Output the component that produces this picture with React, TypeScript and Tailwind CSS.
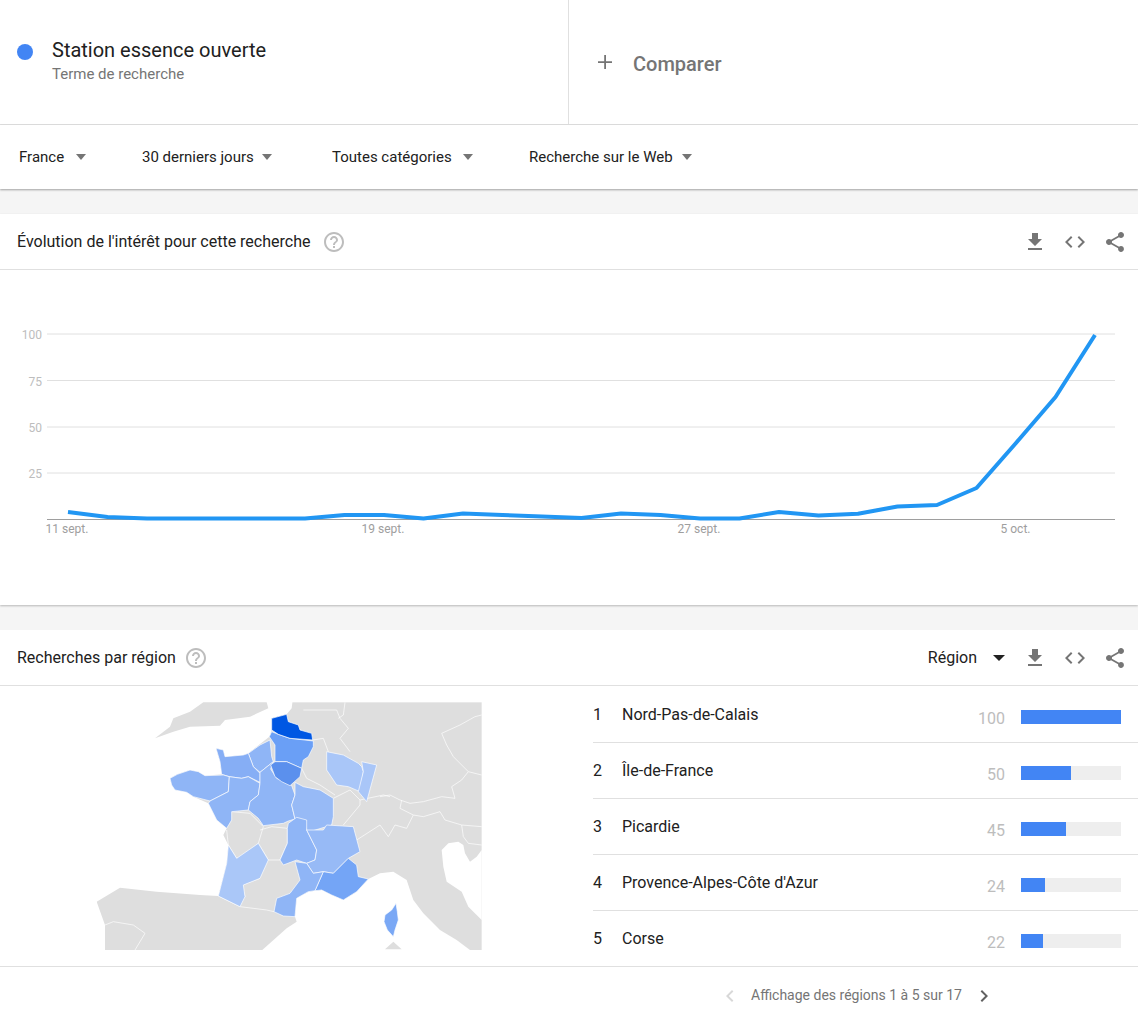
import React from "react";

const font = { fontFamily: "Roboto, sans-serif" };

const P = {
  download: "M19 9h-4V3H9v6H5l7 7 7-7zM5 18v2h14v-2H5z",
  code: "M9.4 16.6L4.8 12l4.6-4.6L8 6l-6 6 6 6 1.4-1.4zm5.2 0l4.6-4.6-4.6-4.6L16 6l6 6-6 6-1.4-1.4z",
  share:
    "M18 16.08c-.76 0-1.44.3-1.96.77L8.91 12.7c.05-.23.09-.46.09-.7s-.04-.47-.09-.7l7.05-4.11c.54.5 1.25.81 2.04.81 1.66 0 3-1.34 3-3s-1.34-3-3-3-3 1.34-3 3c0 .24.04.47.09.7L8.04 9.81C7.5 9.31 6.79 9 6 9c-1.66 0-3 1.34-3 3s1.34 3 3 3c.79 0 1.5-.31 2.04-.81l7.12 4.16c-.05.21-.08.43-.08.65 0 1.61 1.31 2.92 2.92 2.92 1.61 0 2.92-1.31 2.92-2.92s-1.31-2.92-2.92-2.92z",
  help: "M11 18h2v-2h-2v2zm1-16C6.48 2 2 6.48 2 12s4.48 10 10 10 10-4.48 10-10S17.52 2 12 2zm0 18c-4.41 0-8-3.59-8-8s3.59-8 8-8 8 3.59 8 8-3.59 8-8 8zm0-14c-2.21 0-4 1.79-4 4h2c0-1.1.9-2 2-2s2 .9 2 2c0 2-3 1.75-3 5h2c0-2.25 3-2.5 3-5 0-2.21-1.79-4-4-4z",
};

function Icon({ d, className }: { d: string; className: string }) {
  return (
    <svg viewBox="0 0 24 24" className={className} fill="currentColor">
      <path d={d} />
    </svg>
  );
}

function Filter({ label, className, caret }: { label: string; className: string; caret: string }) {
  return (
    <div className={`flex items-center text-[15px] text-[#212121] ${className}`}>
      <span>{label}</span>
      <span className={`h-0 w-0 border-x-[5.5px] border-t-[6px] border-x-transparent border-t-[#757575] ${caret}`} />
    </div>
  );
}

function Actions() {
  return (
    <div className="flex items-center gap-4 text-[#757575]">
      <Icon d={P.download} className="h-6 w-6" />
      <Icon d={P.code} className="h-6 w-6" />
      <Icon d={P.share} className="h-6 w-6" />
    </div>
  );
}

const ys = [512, 517, 518.5, 518.5, 518.5, 518.5, 518.5, 515, 515, 518.5, 513.5, 515, 516.5, 518, 513.5, 515, 518.5, 518.5, 512, 515.5, 513.7, 506.5, 505, 488, 443, 397, 335];
const line = ys.map((y, i) => `${68 + i * 39.5},${y - 270}`).join(" ");

function Chart() {
  return (
    <svg width="1138" height="335" className="block" style={font}>
      {[
        [334, "100"],
        [380.5, "75"],
        [427, "50"],
        [473, "25"],
      ].map(([y, t]) => (
        <g key={t as string}>
          <line x1="47" x2="1115" y1={(y as number) - 270} y2={(y as number) - 270} stroke="#e0e0e0" />
          <text x="42" y={(y as number) - 265} textAnchor="end" fontSize="12" fill="#bdbdbd">{t}</text>
        </g>
      ))}
      <line x1="47" x2="1115" y1="249.5" y2="249.5" stroke="#9e9e9e" />
      {[
        [67, "11 sept."],
        [383, "19 sept."],
        [699, "27 sept."],
        [1015.5, "5 oct."],
      ].map(([x, t]) => (
        <text key={t as string} x={x as number} y="263" textAnchor="middle" fontSize="12" fill="#9e9e9e">{t}</text>
      ))}
      <polyline points={line} fill="none" stroke="#2196f3" strokeWidth="4" strokeLinejoin="round" />
    </svg>
  );
}

const main = "#8fb5f6";
const regions: [string, string][] = [
  ["#a9c6f8", "710,170 760,180 805,205 815,215 820,230 810,290 775,275 740,270 710,225"],
  ["#a9c6f8", "815,200 860,210 830,320 805,290 820,230"],
  [main, "475,175 510,150 540,135 545,185 550,200 510,232 490,215"],
  ["#86aef5", "378,160 400,165 405,185 460,180 475,175 490,215 510,235 510,262 475,245 455,250 418,245 395,238 390,200"],
  [main, "240,250 262,238 300,225 325,230 345,242 400,240 418,245 415,290 360,318 310,305 290,292 255,285 245,270"],
  [main, "418,245 455,250 475,245 510,265 505,300 480,320 475,345 425,350 425,375 410,400 380,375 355,325 360,318 415,290"],
  [main, "510,232 550,200 542,222 560,250 605,272 615,300 605,330 615,372 595,378 580,385 520,392 505,370 475,345 480,320 505,300 510,265"],
  ["#97baf6", "615,262 640,275 690,285 730,310 730,365 725,390 660,410 650,405 640,375 615,372 605,330 615,300"],
  [main, "595,385 620,367 650,375 650,405 680,465 675,495 650,505 620,495 580,510 570,495 592,445 592,400"],
  ["#97baf6", "650,405 700,405 710,390 790,395 810,470 775,490 730,535 700,530 670,535 650,505 675,495 680,465"],
  ["#74a5f6", "775,490 800,510 805,545 835,552 800,590 760,615 725,600 695,585 675,587 700,530 730,535"],
  [main, "615,500 650,505 670,535 700,530 675,587 655,590 620,610 615,665 580,663 552,650 560,610 600,595 630,555"],
  ["#aac7f8", "415,450 440,490 505,445 535,495 510,550 460,570 465,605 450,635 385,603 410,505"],
  ["#7aa8f5", "918,625 922,650 925,675 915,705 910,725 892,705 882,680 885,660 905,645"],
  ["#6a9ff6", "545,110 565,118 600,130 670,138 670,155 655,185 640,195 635,220 590,200 555,200 555,150 538,125"],
  ["#5b90ed", "542,210 555,200 590,200 635,220 630,245 600,272 575,260 555,245"],
  ["#0057e3", "545,70 590,58 595,80 625,90 630,105 665,115 668,135 600,130 565,118 545,105"],
];

const borders = [
  "1175,60 1155,65 1110,90 1055,115 1070,150 1090,185 1135,230 1115,255 1085,275 1095,310",
  "870,305 900,300 930,315 960,325 1000,320 1055,305 1095,310",
  "1135,230 1175,240",
  "800,435 870,390 895,425 915,390 950,400 970,360 930,340 935,315",
  "970,360 1000,365 1050,350 1065,375 1115,390 1175,395",
  "1115,390 1120,425 1135,445 1175,450",
  "730,310 780,285 810,315 810,330 760,390",
  "810,315 880,300 900,305",
  "668,135 700,130 715,170",
  "640,45 740,45 750,70 775,100 750,130 780,170",
  "765,22 760,60 745,70",
  "635,220 650,250 690,270 735,300",
  "45,690 70,680 130,690 165,715 135,765",
  "385,603 450,635 530,645 552,650",
  "425,350 480,355 520,395 505,445 460,485 440,490 415,450 410,405",
  "510,405 545,395 592,400 592,445 570,495 535,495 505,445",
  "465,605 455,570 510,550",
];

function FranceMap() {
  return (
    <svg width="400" height="260" viewBox="0 0 1200 780" className="block">
      <rect x="20" y="22" width="1155" height="743" fill="#dedede" />
      <polygon fill="#fff" points="0,0 610,0 605,40 590,58 545,70 545,105 538,125 475,175 460,180 405,185 400,165 378,160 390,200 395,238 345,242 325,230 300,225 262,238 240,250 245,270 255,285 290,292 310,305 355,325 380,375 410,400 400,420 415,450 410,505 385,603 330,600 200,590 90,578 20,620 45,690 45,780 0,780" />
      <polygon fill="#fff" points="620,680 615,665 620,610 655,590 675,587 695,585 725,600 760,615 800,590 835,552 870,535 910,530 950,555 970,615 1000,655 1050,705 1100,735 1140,765 1140,780 500,780 590,700" />
      <polygon fill="#fff" points="1055,465 1075,445 1105,440 1120,450 1125,475 1140,500 1160,485 1175,465 1175,675 1135,635 1115,590 1070,560 1060,515" />
      <polygon fill="#dedede" points="195,130 240,95 250,70 300,50 340,22 530,22 535,40 480,65 405,75 390,92 300,95 250,110" />
      <polygon fill="#dedede" points="885,763 910,740 935,763" />
      <g fill="none" stroke="#fff" strokeWidth="2" strokeLinejoin="round">
        {borders.map((p) => (
          <polyline key={p} points={p} />
        ))}
      </g>
      {regions.map(([c, p]) => (
        <polygon key={p} fill={c} points={p} stroke="#fff" strokeWidth="2" strokeLinejoin="round" />
      ))}
    </svg>
  );
}

const rows = [
  ["1", "Nord-Pas-de-Calais", 100],
  ["2", "Île-de-France", 50],
  ["3", "Picardie", 45],
  ["4", "Provence-Alpes-Côte d'Azur", 24],
  ["5", "Corse", 22],
] as const;

export default function App() {
  return (
    <div className="h-[1018px] w-[1138px] overflow-hidden bg-white" style={font}>
      <div className="flex h-[125px] border-b border-[#e0e0e0]">
        <div className="flex w-[569px] items-start border-r border-[#e0e0e0] pl-[17px] pt-[38px]">
          <span className="mt-[6px] h-4 w-4 rounded-full bg-[#4285f4]" />
          <div className="ml-[19px]">
            <div className="text-[20px] leading-[24px] text-[#212121]">Station essence ouverte</div>
            <div className="mt-[3px] text-[15px] leading-[18px] text-[#757575]">Terme de recherche</div>
          </div>
        </div>
        <div className="flex items-center pl-[24px] pt-[3px] text-[#757575]">
          <svg width="24" height="24" viewBox="0 0 24 24" fill="currentColor" className="-mt-[3px]"><path d="M19 13h-6v6h-1.8v-6H5v-1.8h6.2V5H13v6.2h6z" /></svg>
          <span className="ml-[16px] text-[20px] font-medium">Comparer</span>
        </div>
      </div>

      <div className="relative flex h-[64px] items-center bg-white pl-[19px] shadow-[0_1px_2px_rgba(0,0,0,0.35)]">
        <Filter label="France" className="w-[123px]" caret="ml-[12px]" />
        <Filter label="30 derniers jours" className="w-[190px]" caret="ml-[8px]" />
        <Filter label="Toutes catégories" className="w-[197px]" caret="ml-[11px]" />
        <Filter label="Recherche sur le Web" className="" caret="ml-[9px]" />
      </div>

      <div className="h-[25px] bg-[#f5f5f5]" />

      <section className="relative shadow-[0_1px_2px_rgba(0,0,0,0.25)]">
        <div className="flex h-[56px] items-center justify-between border-b border-[#e0e0e0] pl-[17px] pr-[11px]">
          <div className="flex items-center">
            <span className="text-[16px] text-[#212121]">Évolution de l'intérêt pour cette recherche</span>
            <Icon d={P.help} className="ml-[12px] h-6 w-6 text-[#bdbdbd]" />
          </div>
          <Actions />
        </div>
        <Chart />
      </section>

      <div className="h-[25px] bg-[#f5f5f5]" />

      <section>
        <div className="flex h-[56px] items-center justify-between border-b border-[#e0e0e0] pl-[17px] pr-[11px]">
          <div className="flex items-center">
            <span className="text-[16px] text-[#212121]">Recherches par région</span>
            <Icon d={P.help} className="ml-[8px] h-6 w-6 text-[#bdbdbd]" />
          </div>
          <div className="flex items-center">
            <span className="text-[16px] text-[#212121]">Région</span>
            <span className="ml-[16px] mr-[18px] h-0 w-0 border-x-[6px] border-t-[6px] border-x-transparent border-t-[#212121]" />
            <Actions />
          </div>
        </div>
        <div className="flex h-[281px] border-b border-[#e0e0e0]">
          <div className="ml-[90px] mt-[9px] w-[503px]">
            <FranceMap />
          </div>
          <div className="flex-1 pt-px">
            {rows.map(([n, name, v], i) => (
              <div key={n} className={`flex h-[56px] items-start pt-[18px] text-[16px] leading-[20px] text-[#212121] ${i < 4 ? "border-b border-[#e0e0e0]" : ""}`}>
                <span className="w-[29px]">{n}</span>
                <span className="flex-1">{name}</span>
                <span className="mr-[16px] mt-[4px] text-[#bdbdbd]">{v}</span>
                <div className="mr-[17px] mt-[5px] h-[14px] w-[100px] bg-[#eeeeee]">
                  <div className="h-full bg-[#4285f4]" style={{ width: `${v}%` }} />
                </div>
              </div>
            ))}
          </div>
        </div>
        <div className="flex h-[51px] items-center pl-[718px] pt-[6px] text-[14px] text-[#757575]">
          <svg width="24" height="24" viewBox="0 0 24 24" fill="#d8d8d8"><path d="M15.4 7.4L14 6l-6 6 6 6 1.4-1.4L10.8 12z" /></svg>
          <span className="ml-[9px]">Affichage des régions 1 à 5 sur 17</span>
          <svg className="ml-[10px]" width="24" height="24" viewBox="0 0 24 24" fill="#616161"><path d="M10 6L8.6 7.4l4.6 4.6-4.6 4.6L10 18l6-6z" /></svg>
        </div>
      </section>
    </div>
  );
}
